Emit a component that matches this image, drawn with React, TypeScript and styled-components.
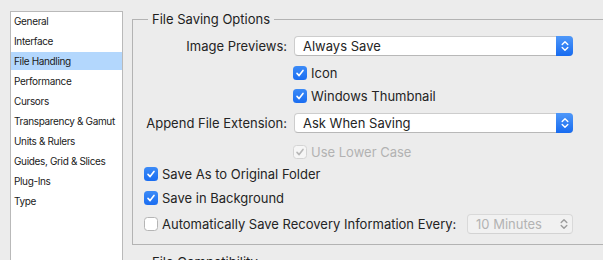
import React from 'react';
import styled, { createGlobalStyle } from 'styled-components';

const GlobalStyle = createGlobalStyle`
    html, body {
        margin: 0;
        background: #ececec;
        overflow: hidden;
    }

    body {
        font-family: Inter, 'Liberation Sans', sans-serif;
        color: #242424;
    }
`;

const Page = styled.div`
    display: flex;
    align-items: flex-start;
    gap: 9px;
    width: 603px;
    height: 260px;
    padding: 11px 0 0 10px;
    box-sizing: border-box;
    overflow: hidden;
`;

const Sidebar = styled.ul`
    flex-shrink: 0;
    display: flex;
    flex-direction: column;
    gap: 2px;
    width: 113px;
    height: 270px;
    margin: 0;
    padding: 0;
    list-style: none;
    background: #fff;
    border: 1px solid #b9b9b9;
    box-sizing: border-box;
`;

const SidebarItem = styled.li<{ $active?: boolean }>`
    height: 18px;
    line-height: 18px;
    padding-left: 3px;
    font-size: 10px;
    letter-spacing: -0.35px;
    color: #1a1a1a;
    white-space: nowrap;
    background: ${(p) => (p.$active ? '#b3d7fd' : 'transparent')};
`;

const Main = styled.div`
    flex-shrink: 0;
    width: 500px;
`;

const Group = styled.fieldset<{ $mt?: number }>`
    margin: ${(p) => p.$mt ?? 0}px 0 0 0;
    padding: 9px 0 10px 11px;
    min-width: 0;
    border: 1px solid #b3b3b3;
`;

const Legend = styled.legend`
    margin-left: 4px;
    padding: 0 4px;
    font-size: 13px;
    line-height: 16px;
    color: #1e1e1e;
`;

const Row = styled.div<{ $mt?: number; $indent?: number }>`
    display: flex;
    align-items: center;
    width: 429px;
    height: 20px;
    margin-top: ${(p) => p.$mt ?? 0}px;
    padding-left: ${(p) => p.$indent ?? 0}px;
    box-sizing: border-box;
    font-size: 13px;
    white-space: nowrap;
`;

const FieldLabel = styled.span`
    flex-shrink: 0;
    width: 143px;
    margin-right: 7px;
    text-align: right;
`;

const SelectBox = styled.div<{ $disabled?: boolean; $width?: number }>`
    display: flex;
    align-items: center;
    height: 20px;
    box-sizing: border-box;
    margin-left: auto;
    width: ${(p) => (p.$width ? `${p.$width}px` : 'auto')};
    flex: ${(p) => (p.$width ? 'none' : '1')};
    background: ${(p) => (p.$disabled ? '#f1f1f1' : '#fff')};
    border: 1px solid ${(p) => (p.$disabled ? '#d9d9d9' : '#cdcdcd')};
    border-bottom-color: ${(p) => (p.$disabled ? '#d3d3d3' : '#b8b8b8')};
    border-radius: 4px;
    color: ${(p) => (p.$disabled ? '#b3b3b3' : '#242424')};
`;

const SelectText = styled.span`
    flex: 1;
    padding-left: 8px;
`;

const Stepper = styled.span`
    align-self: stretch;
    display: flex;
    align-items: center;
    justify-content: center;
    width: 17px;
    margin: -1px -1px -1px 0;
    border-radius: 0 4px 4px 0;
    background: linear-gradient(#4f98f9, #176bf0);
`;

const PlainStepper = styled.span`
    display: flex;
    align-items: center;
    justify-content: center;
    width: 17px;
`;

const Box = styled.span<{ $checked?: boolean; $disabled?: boolean }>`
    flex-shrink: 0;
    display: flex;
    align-items: center;
    justify-content: center;
    width: 14px;
    height: 14px;
    box-sizing: border-box;
    border-radius: 3.5px;
    background: ${(p) =>
        p.$disabled ? '#f6f6f6' : p.$checked ? 'linear-gradient(#3c8bf7, #1a6df1)' : '#fff'};
    border: ${(p) =>
        p.$disabled ? '1px solid #d4d4d4' : p.$checked ? 'none' : '1px solid #b5b5b5'};
`;

const CheckText = styled.span<{ $disabled?: boolean }>`
    margin-left: 4px;
    color: ${(p) => (p.$disabled ? '#b2b2b2' : 'inherit')};
`;

const Chevrons: React.FC<{ color: string }> = ({ color }) => (
    <svg width='8' height='12' viewBox='0 0 8 12'>
        <path d='M1.2 4.6 L4 1.8 L6.8 4.6 M1.2 7.4 L4 10.2 L6.8 7.4'
            fill='none' stroke={color} strokeWidth='1.4'
            strokeLinecap='round' strokeLinejoin='round'
        />
    </svg>
);

interface SelectProps {
    value: string;
    disabled?: boolean;
    width?: number;
}

const Select: React.FC<SelectProps> = ({ value, disabled, width }) => (
    <SelectBox $disabled={disabled} $width={width}>
        <SelectText>{value}</SelectText>
        {disabled ? (
            <PlainStepper><Chevrons color='#9c9c9c' /></PlainStepper>
        ) : (
            <Stepper><Chevrons color='#fff' /></Stepper>
        )}
    </SelectBox>
);

interface CheckboxProps {
    label: string;
    checked?: boolean;
    disabled?: boolean;
}

const Checkbox: React.FC<CheckboxProps> = ({ label, checked, disabled }) => (
    <>
        <Box $checked={checked} $disabled={disabled}>
            {checked && (
                <svg width='10' height='10' viewBox='0 0 10 10'>
                    <path d='M2 5.4 L4.1 7.6 L8 2.4' fill='none'
                        stroke={disabled ? '#b8b8b8' : '#fff'} strokeWidth='1.6'
                        strokeLinecap='round' strokeLinejoin='round'
                    />
                </svg>
            )}
        </Box>
        <CheckText $disabled={disabled}>{label}</CheckText>
    </>
);

const sections = [
    'General',
    'Interface',
    'File Handling',
    'Performance',
    'Cursors',
    'Transparency & Gamut',
    'Units & Rulers',
    'Guides, Grid & Slices',
    'Plug-Ins',
    'Type',
];

const App: React.FC = () => (
    <>
        <GlobalStyle />
        <Page>
            <Sidebar>
                {sections.map((name) => (
                    <SidebarItem key={name} $active={name === 'File Handling'}>
                        {name}
                    </SidebarItem>
                ))}
            </Sidebar>

            <Main>
                <Group>
                    <Legend>File Saving Options</Legend>

                    <Row>
                        <FieldLabel>Image Previews:</FieldLabel>
                        <Select value='Always Save' />
                    </Row>
                    <Row $mt={7} $indent={149}>
                        <Checkbox label='Icon' checked />
                    </Row>
                    <Row $mt={3} $indent={149}>
                        <Checkbox label='Windows Thumbnail' checked />
                    </Row>

                    <Row $mt={7}>
                        <FieldLabel>Append File Extension:</FieldLabel>
                        <Select value='Ask When Saving' />
                    </Row>
                    <Row $mt={9} $indent={149}>
                        <Checkbox label='Use Lower Case' checked disabled />
                    </Row>

                    <Row $mt={2}>
                        <Checkbox label='Save As to Original Folder' checked />
                    </Row>
                    <Row $mt={4}>
                        <Checkbox label='Save in Background' checked />
                    </Row>
                    <Row $mt={6}>
                        <Checkbox label='Automatically Save Recovery Information Every:' />
                        <Select value='10 Minutes' width={106} disabled />
                    </Row>
                </Group>

                <Group $mt={9}>
                    <Legend>File Compatibility</Legend>
                    <Row />
                </Group>
            </Main>
        </Page>
    </>
);

export default App;
